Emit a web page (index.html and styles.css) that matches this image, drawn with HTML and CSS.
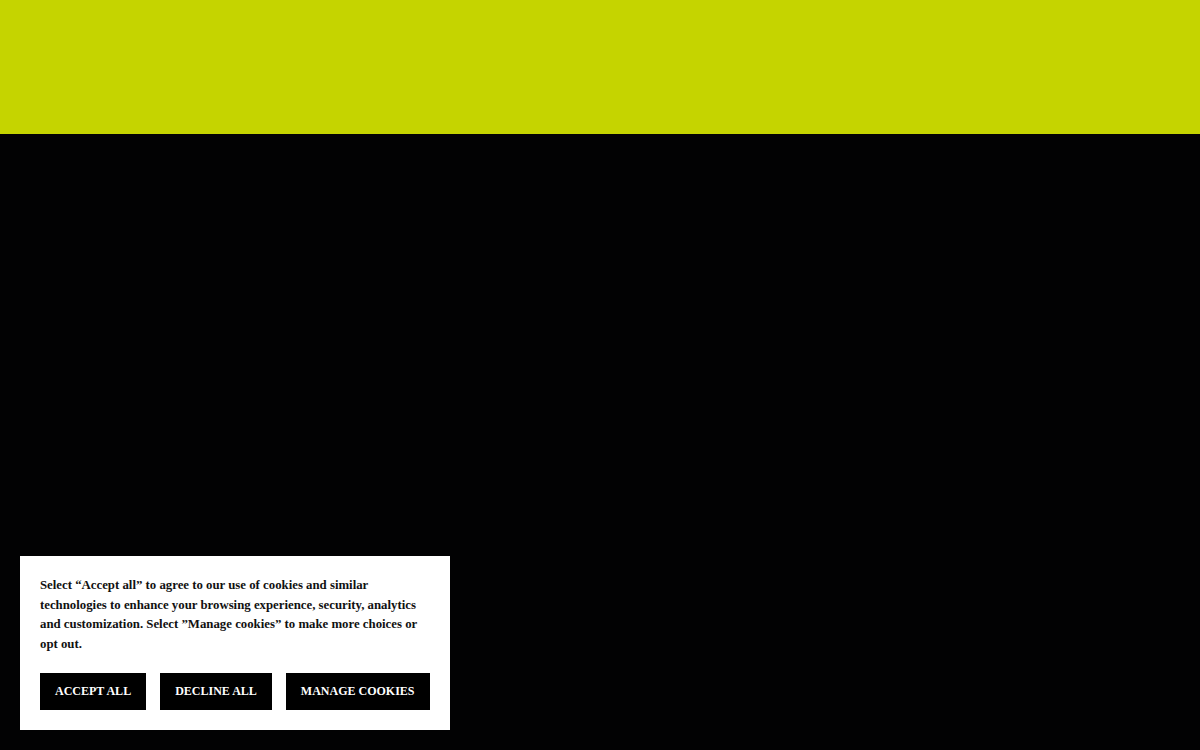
FILE: index.html
```html
<!DOCTYPE html>
<html lang="en">
<head>
<meta charset="utf-8">
<title>Cookies</title>
<link rel="stylesheet" href="styles.css">
</head>
<body>
<header class="topbar"></header>
<main class="content"></main>
<div class="cookie-banner">
  <p class="cookie-text">Select “Accept all” to agree to our use of cookies and similar technologies to enhance your browsing experience, security, analytics and customization. Select ”Manage cookies” to make more choices or opt out.</p>
  <div class="cookie-actions">
    <button class="cookie-btn">Accept all</button>
    <button class="cookie-btn">Decline all</button>
    <button class="cookie-btn">Manage cookies</button>
  </div>
</div>
</body>
</html>
```
FILE: styles.css
```css
html, body {
  margin: 0;
  padding: 0;
  height: 100%;
}
body {
  background: #020203;
  font-family: "Liberation Serif", "Times New Roman", serif;
  overflow: hidden;
}
.topbar {
  height: 134px;
  background: #c5d400;
}
.content {
  height: calc(100% - 134px);
}
.cookie-banner {
  position: fixed;
  left: 20px;
  bottom: 20px;
  width: 430px;
  box-sizing: border-box;
  background: #ffffff;
  padding: 20px;
}
.cookie-text {
  margin: 0 0 19px 0;
  font-size: 12.8px;
  font-weight: bold;
  line-height: 19.5px;
  color: #111;
}
.cookie-actions {
  display: flex;
  gap: 14px;
}
.cookie-btn {
  flex: none;
  white-space: nowrap;
  height: 37px;
  padding: 0 15px;
  background: #000;
  color: #fff;
  border: none;
  border-radius: 0;
  font-family: "Liberation Serif", "Times New Roman", serif;
  font-size: 12px;
  font-weight: bold;
  text-transform: uppercase;
  cursor: pointer;
}
```
